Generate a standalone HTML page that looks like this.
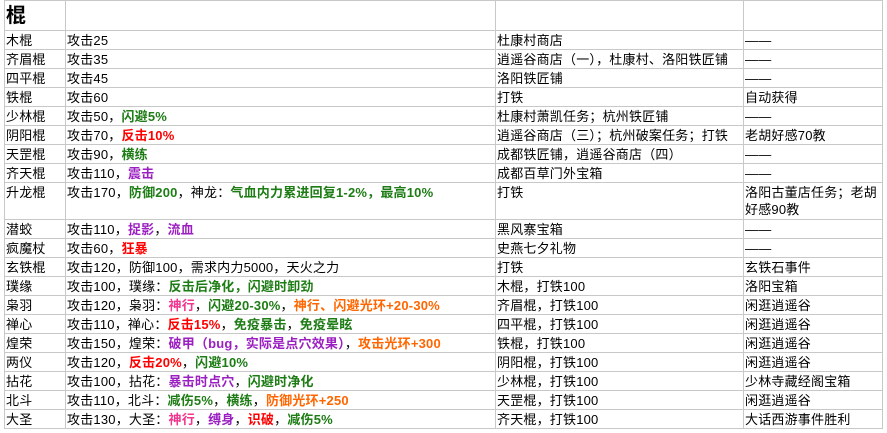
<!DOCTYPE html>
<html><head><meta charset="utf-8"><style>
html,body{margin:0;padding:0;background:#fff;width:887px;height:433px;overflow:hidden}
table{position:absolute;left:4px;top:0;border-collapse:collapse;table-layout:fixed;width:878px;font-family:"Liberation Sans","Noto Sans CJK SC",sans-serif;font-size:13px;color:#000}
td{border:1px solid #c8c8c8;padding:1px 1px 0 1px;vertical-align:top;line-height:17px;height:17px;overflow:hidden;white-space:nowrap;letter-spacing:0.2px}
tr.h td{height:28px;line-height:28px}
tr.d td{height:35px}
.w{white-space:normal}
.g{color:#1d7c14;font-weight:bold}
.p{color:#9b1fc1;font-weight:bold}
.r{color:#ff0000;font-weight:bold}
.o{color:#ff6600;font-weight:bold}
.k{color:#f0368f;font-weight:bold}
</style></head><body>
<table>
<colgroup><col style="width:61px"><col style="width:430px"><col style="width:248px"><col style="width:139px"></colgroup>
<tr class="h"><td style="font-size:20px;font-weight:bold">棍</td><td></td><td></td><td></td></tr>
<tr><td>木棍</td><td>攻击25</td><td>杜康村商店</td><td>——</td></tr>
<tr><td>齐眉棍</td><td>攻击35</td><td>逍遥谷商店（一），杜康村、洛阳铁匠铺</td><td>——</td></tr>
<tr><td>四平棍</td><td>攻击45</td><td>洛阳铁匠铺</td><td>——</td></tr>
<tr><td>铁棍</td><td>攻击60</td><td>打铁</td><td>自动获得</td></tr>
<tr><td>少林棍</td><td>攻击50，<span class="g">闪避5%</span></td><td>杜康村萧凯任务；杭州铁匠铺</td><td>——</td></tr>
<tr><td>阴阳棍</td><td>攻击70，<span class="r">反击10%</span></td><td>逍遥谷商店（三）；杭州破案任务；打铁</td><td>老胡好感70教</td></tr>
<tr><td>天罡棍</td><td>攻击90，<span class="g">横练</span></td><td>成都铁匠铺，逍遥谷商店（四）</td><td>——</td></tr>
<tr><td>齐天棍</td><td>攻击110，<span class="p">震击</span></td><td>成都百草门外宝箱</td><td>——</td></tr>
<tr class="d"><td>升龙棍</td><td>攻击170，<span class="g">防御200</span>，神龙：<span class="g">气血内力累进回复1-2%，最高10%</span></td><td>打铁</td><td class="w">洛阳古董店任务；老胡好感90教</td></tr>
<tr><td>潜蛟</td><td>攻击110，<span class="p">捉影</span>，<span class="p">流血</span></td><td>黑风寨宝箱</td><td>——</td></tr>
<tr><td>疯魔杖</td><td>攻击60，<span class="r">狂暴</span></td><td>史燕七夕礼物</td><td>——</td></tr>
<tr><td>玄铁棍</td><td>攻击120，防御100，需求内力5000，天火之力</td><td>打铁</td><td>玄铁石事件</td></tr>
<tr><td>璞缘</td><td>攻击100，璞缘：<span class="g">反击后净化，闪避时卸劲</span></td><td>木棍，打铁100</td><td>洛阳宝箱</td></tr>
<tr><td>枭羽</td><td>攻击120，枭羽：<span class="k">神行</span>，<span class="g">闪避20-30%</span>，<span class="o">神行、闪避光环+20-30%</span></td><td>齐眉棍，打铁100</td><td>闲逛逍遥谷</td></tr>
<tr><td>禅心</td><td>攻击110，禅心：<span class="r">反击15%</span>，<span class="g">免疫暴击</span>，<span class="g">免疫晕眩</span></td><td>四平棍，打铁100</td><td>闲逛逍遥谷</td></tr>
<tr><td>煌荣</td><td>攻击150，煌荣：<span class="p">破甲（bug，实际是点穴效果）</span>，<span class="o">攻击光环+300</span></td><td>铁棍，打铁100</td><td>闲逛逍遥谷</td></tr>
<tr><td>两仪</td><td>攻击120，<span class="r">反击20%</span>，<span class="g">闪避10%</span></td><td>阴阳棍，打铁100</td><td>闲逛逍遥谷</td></tr>
<tr><td>拈花</td><td>攻击100，拈花：<span class="p">暴击时点穴</span>，<span class="g">闪避时净化</span></td><td>少林棍，打铁100</td><td>少林寺藏经阁宝箱</td></tr>
<tr><td>北斗</td><td>攻击110，北斗：<span class="g">减伤5%</span>，<span class="g">横练</span>，<span class="o">防御光环+250</span></td><td>天罡棍，打铁100</td><td>闲逛逍遥谷</td></tr>
<tr><td>大圣</td><td>攻击130，大圣：<span class="k">神行</span>，<span class="p">缚身</span>，<span class="r">识破</span>，<span class="g">减伤5%</span></td><td>齐天棍，打铁100</td><td>大话西游事件胜利</td></tr>
</table>
</body></html>
